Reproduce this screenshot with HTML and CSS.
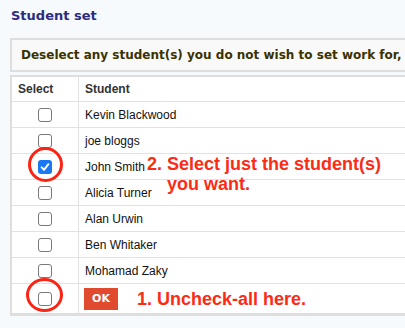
FILE: index.html
```html
<!DOCTYPE html>
<html>
<head>
<meta charset="utf-8">
<link rel="stylesheet" href="styles.css">
</head>
<body>
<div class="page">
  <h2 class="title">Student set</h2>
  <div class="notice">Deselect any student(s) you do not wish to set work for,</div>
  <div class="table-wrap">
    <table class="students">
      <tr class="head"><th class="sel">Select</th><th class="name">Student</th></tr>
      <tr><td class="sel"><span class="cb"></span></td><td class="name">Kevin Blackwood</td></tr>
      <tr><td class="sel"><span class="cb"></span></td><td class="name">joe bloggs</td></tr>
      <tr><td class="sel"><span class="cb checked"><svg viewBox="0 0 14 14" width="14" height="14"><path d="M3.6 7.4 L6 9.8 L10.4 4.2" fill="none" stroke="#fff" stroke-width="2" stroke-linecap="round" stroke-linejoin="round"/></svg></span></td><td class="name">John Smith</td></tr>
      <tr><td class="sel"><span class="cb"></span></td><td class="name">Alicia Turner</td></tr>
      <tr><td class="sel"><span class="cb"></span></td><td class="name">Alan Urwin</td></tr>
      <tr><td class="sel"><span class="cb"></span></td><td class="name">Ben Whitaker</td></tr>
      <tr><td class="sel"><span class="cb"></span></td><td class="name">Mohamad Zaky</td></tr>
      <tr class="last"><td class="sel"><span class="cb"></span></td><td class="name"><span class="ok">OK</span><span class="note">1. Uncheck-all here.</span></td></tr>
    </table>
    <span class="ring ring-a"></span>
    <span class="ring ring-b"></span>
    <div class="callout">2. Select just the student(s) you want.</div>
  </div>
</div>
</body>
</html>
```
FILE: styles.css
```css
html, body {
  margin: 0;
  padding: 0;
  background: #f7fafc;
  overflow: hidden;
}
.page {
  width: 405px;
  height: 328px;
  overflow: hidden;
}
.title {
  margin: 0;
  padding: 8px 11px 0;
  font: bold 13px/15px "DejaVu Sans", sans-serif;
  color: #2b2b80;
}
.notice {
  margin: 15px 0 0 10px;
  width: 440px;
  height: 30px;
  border: 2px solid #dedede;
  background: #f9f9f9;
  padding-left: 9px;
  font: bold 12px/30px "DejaVu Sans", sans-serif;
  color: #3a3200;
  white-space: nowrap;
  overflow: hidden;
}
.table-wrap {
  position: relative;
  margin: 3px 0 0 10px;
}
.students {
  border-collapse: separate;
  border-spacing: 0;
  width: 430px;
  background: #fff;
  border-top: 2px solid #dedede;
  border-left: 2px solid #dedede;
  border-bottom: 3px solid #dedede;
  font-family: "Liberation Sans", Arial, sans-serif;
}
.students th, .students td {
  padding: 0;
  border-bottom: 1px solid #e2e2e2;
  text-align: left;
  vertical-align: middle;
}
.students tr.last td { border-bottom: none; }
.students .sel {
  width: 66px;
  border-right: 1px solid #e2e2e2;
  text-align: center;
}
.students th.sel { text-align: left; padding-left: 6px; width: 60px; }
.students .name { padding-left: 6px; }
.head th {
  height: 24px;
  font-size: 12px;
  font-weight: bold;
  color: #333;
}
.students td {
  height: 25px;
  font-size: 12px;
  color: #111;
}
.students tr.last td { height: 29px; }
.cb {
  display: inline-block;
  width: 14px;
  height: 14px;
  box-sizing: border-box;
  border: 1px solid #7a7a7a;
  border-radius: 3px;
  background: #fff;
  vertical-align: middle;
}
.cb.checked {
  border: none;
  background: #1a78f2;
}
.cb svg { display: block; }
.ok {
  display: inline-block;
  vertical-align: middle;
  width: 34px;
  height: 22px;
  margin-left: -1px;
  background: #e04a2f;
  color: #fff;
  font: bold 11px/22px "DejaVu Sans", sans-serif;
  text-align: center;
}
.note {
  display: inline-block;
  vertical-align: middle;
  margin-left: 19px;
  font: bold 18px/20px "Liberation Sans", Arial, sans-serif;
  color: #fb2c16;
}
.ring {
  position: absolute;
  box-sizing: border-box;
  border: 3px solid #fb2414;
  border-radius: 50%;
}
.ring-a {
  left: 18px;
  top: 72px;
  width: 35px;
  height: 35px;
}
.ring-b {
  left: 16px;
  top: 203px;
  width: 37px;
  height: 34px;
}
.callout {
  position: absolute;
  left: 137px;
  top: 79px;
  width: 240px;
  padding-left: 20px;
  text-indent: -20px;
  font: bold 18px/20px "Liberation Sans", Arial, sans-serif;
  color: #fb2c16;
}
```
